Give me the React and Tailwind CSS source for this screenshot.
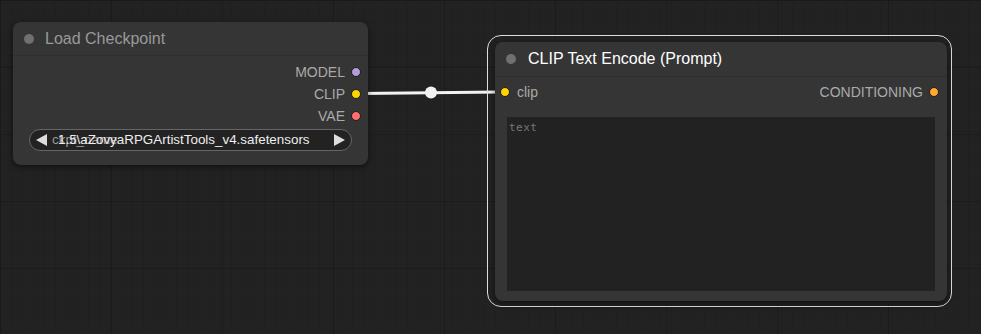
import React from "react";

const font = { fontFamily: '"Liberation Sans", Arial, sans-serif' };

function Dot({ color }) {
  return (
    <span
      className="inline-block h-[10px] w-[10px] rounded-full border border-[#1a1a1a]"
      style={{ backgroundColor: color }}
    />
  );
}

function OutRow({ label, color }) {
  return (
    <div className="flex h-[22px] items-center justify-end gap-[6px] pr-[7px]">
      <span className="text-[14px] text-[#aaaaaa]">{label}</span>
      <Dot color={color} />
    </div>
  );
}

export default function App() {
  return (
    <div
      className="relative h-[334px] w-[981px] overflow-hidden bg-[#222222] bg-[linear-gradient(rgba(0,0,0,0.18)_1px,transparent_1px),linear-gradient(90deg,rgba(0,0,0,0.18)_1px,transparent_1px),linear-gradient(rgba(0,0,0,0.07)_1px,transparent_1px),linear-gradient(90deg,rgba(0,0,0,0.07)_1px,transparent_1px)] bg-[size:111px_67px,111px_67px,11px_11px,11px_11px]"
      style={font}
    >
      {/* link */}
      <svg className="absolute left-0 top-0" width="981" height="334">
        <line x1="360" y1="93.5" x2="500" y2="92" stroke="#f2f2f2" strokeWidth="3" />
        <circle cx="431" cy="92.5" r="6" fill="#f2f2f2" />
      </svg>

      {/* Load Checkpoint node */}
      <div className="absolute left-[13px] top-[22px] flex h-[143px] w-[355px] flex-col rounded-[8px] bg-[#353535] shadow-[0_2px_6px_rgba(0,0,0,0.5)]">
        <div className="flex h-[34px] items-center gap-[11px] border-b border-[#2e2e2e] pl-[11px]">
          <span className="h-[10px] w-[10px] rounded-full bg-[#707070]" />
          <span className="text-[16px] text-[#999999]">Load Checkpoint</span>
        </div>
        <div className="flex flex-col pt-[5px]">
          <OutRow label="MODEL" color="#b39ddb" />
          <OutRow label="CLIP" color="#ffd500" />
          <OutRow label="VAE" color="#ff6e6e" />
        </div>
        <div className="px-[16px] pt-[2px]">
          <div className="relative flex h-[22px] items-center justify-between rounded-full border border-[#666666] bg-[#222222] px-[6px] text-[13.4px]">
            <svg width="11" height="12" viewBox="0 0 11 12"><polygon points="0,6 11,0 11,12" fill="#dddddd" /></svg>
            <span className="absolute left-[22px] text-[#999999]">ckpt_name</span>
            <span className="absolute left-[28px] text-[#eeeeee]">1.5\aZovyaRPGArtistTools_v4.safetensors</span>
            <svg width="11" height="12" viewBox="0 0 11 12"><polygon points="11,6 0,0 0,12" fill="#dddddd" /></svg>
          </div>
        </div>
      </div>

      {/* selection outline */}
      <div className="absolute left-[487px] top-[35px] h-[272px] w-[465px] rounded-[14px] border-[1.5px] border-[#dddddd]" />

      {/* CLIP Text Encode node */}
      <div className="absolute left-[495px] top-[42px] flex h-[259px] w-[452px] flex-col rounded-[8px] bg-[#353535] shadow-[0_2px_6px_rgba(0,0,0,0.5)]">
        <div className="flex h-[35px] items-center gap-[12px] border-b border-[#2e2e2e] pl-[11px]">
          <span className="h-[10px] w-[10px] rounded-full bg-[#707070]" />
          <span className="text-[16px] text-[#ffffff]">CLIP Text Encode (Prompt)</span>
        </div>
        <div className="flex h-[30px] items-center justify-between pl-[5px] pr-[8px]">
          <div className="flex items-center gap-[7px]">
            <Dot color="#ffd500" />
            <span className="text-[14px] text-[#aaaaaa]">clip</span>
          </div>
          <div className="flex items-center gap-[6px]">
            <span className="text-[14px] text-[#aaaaaa]">CONDITIONING</span>
            <Dot color="#ffa931" />
          </div>
        </div>
        <div className="mx-[12px] mb-[10px] mt-[10px] flex-1 bg-[#222222] px-[2px] leading-[18px]">
          <span
            className="text-[11px] tracking-[0.5px] text-[#777777]"
            style={{ fontFamily: '"DejaVu Sans Mono", monospace' }}
          >
            text
          </span>
        </div>
      </div>
    </div>
  );
}
